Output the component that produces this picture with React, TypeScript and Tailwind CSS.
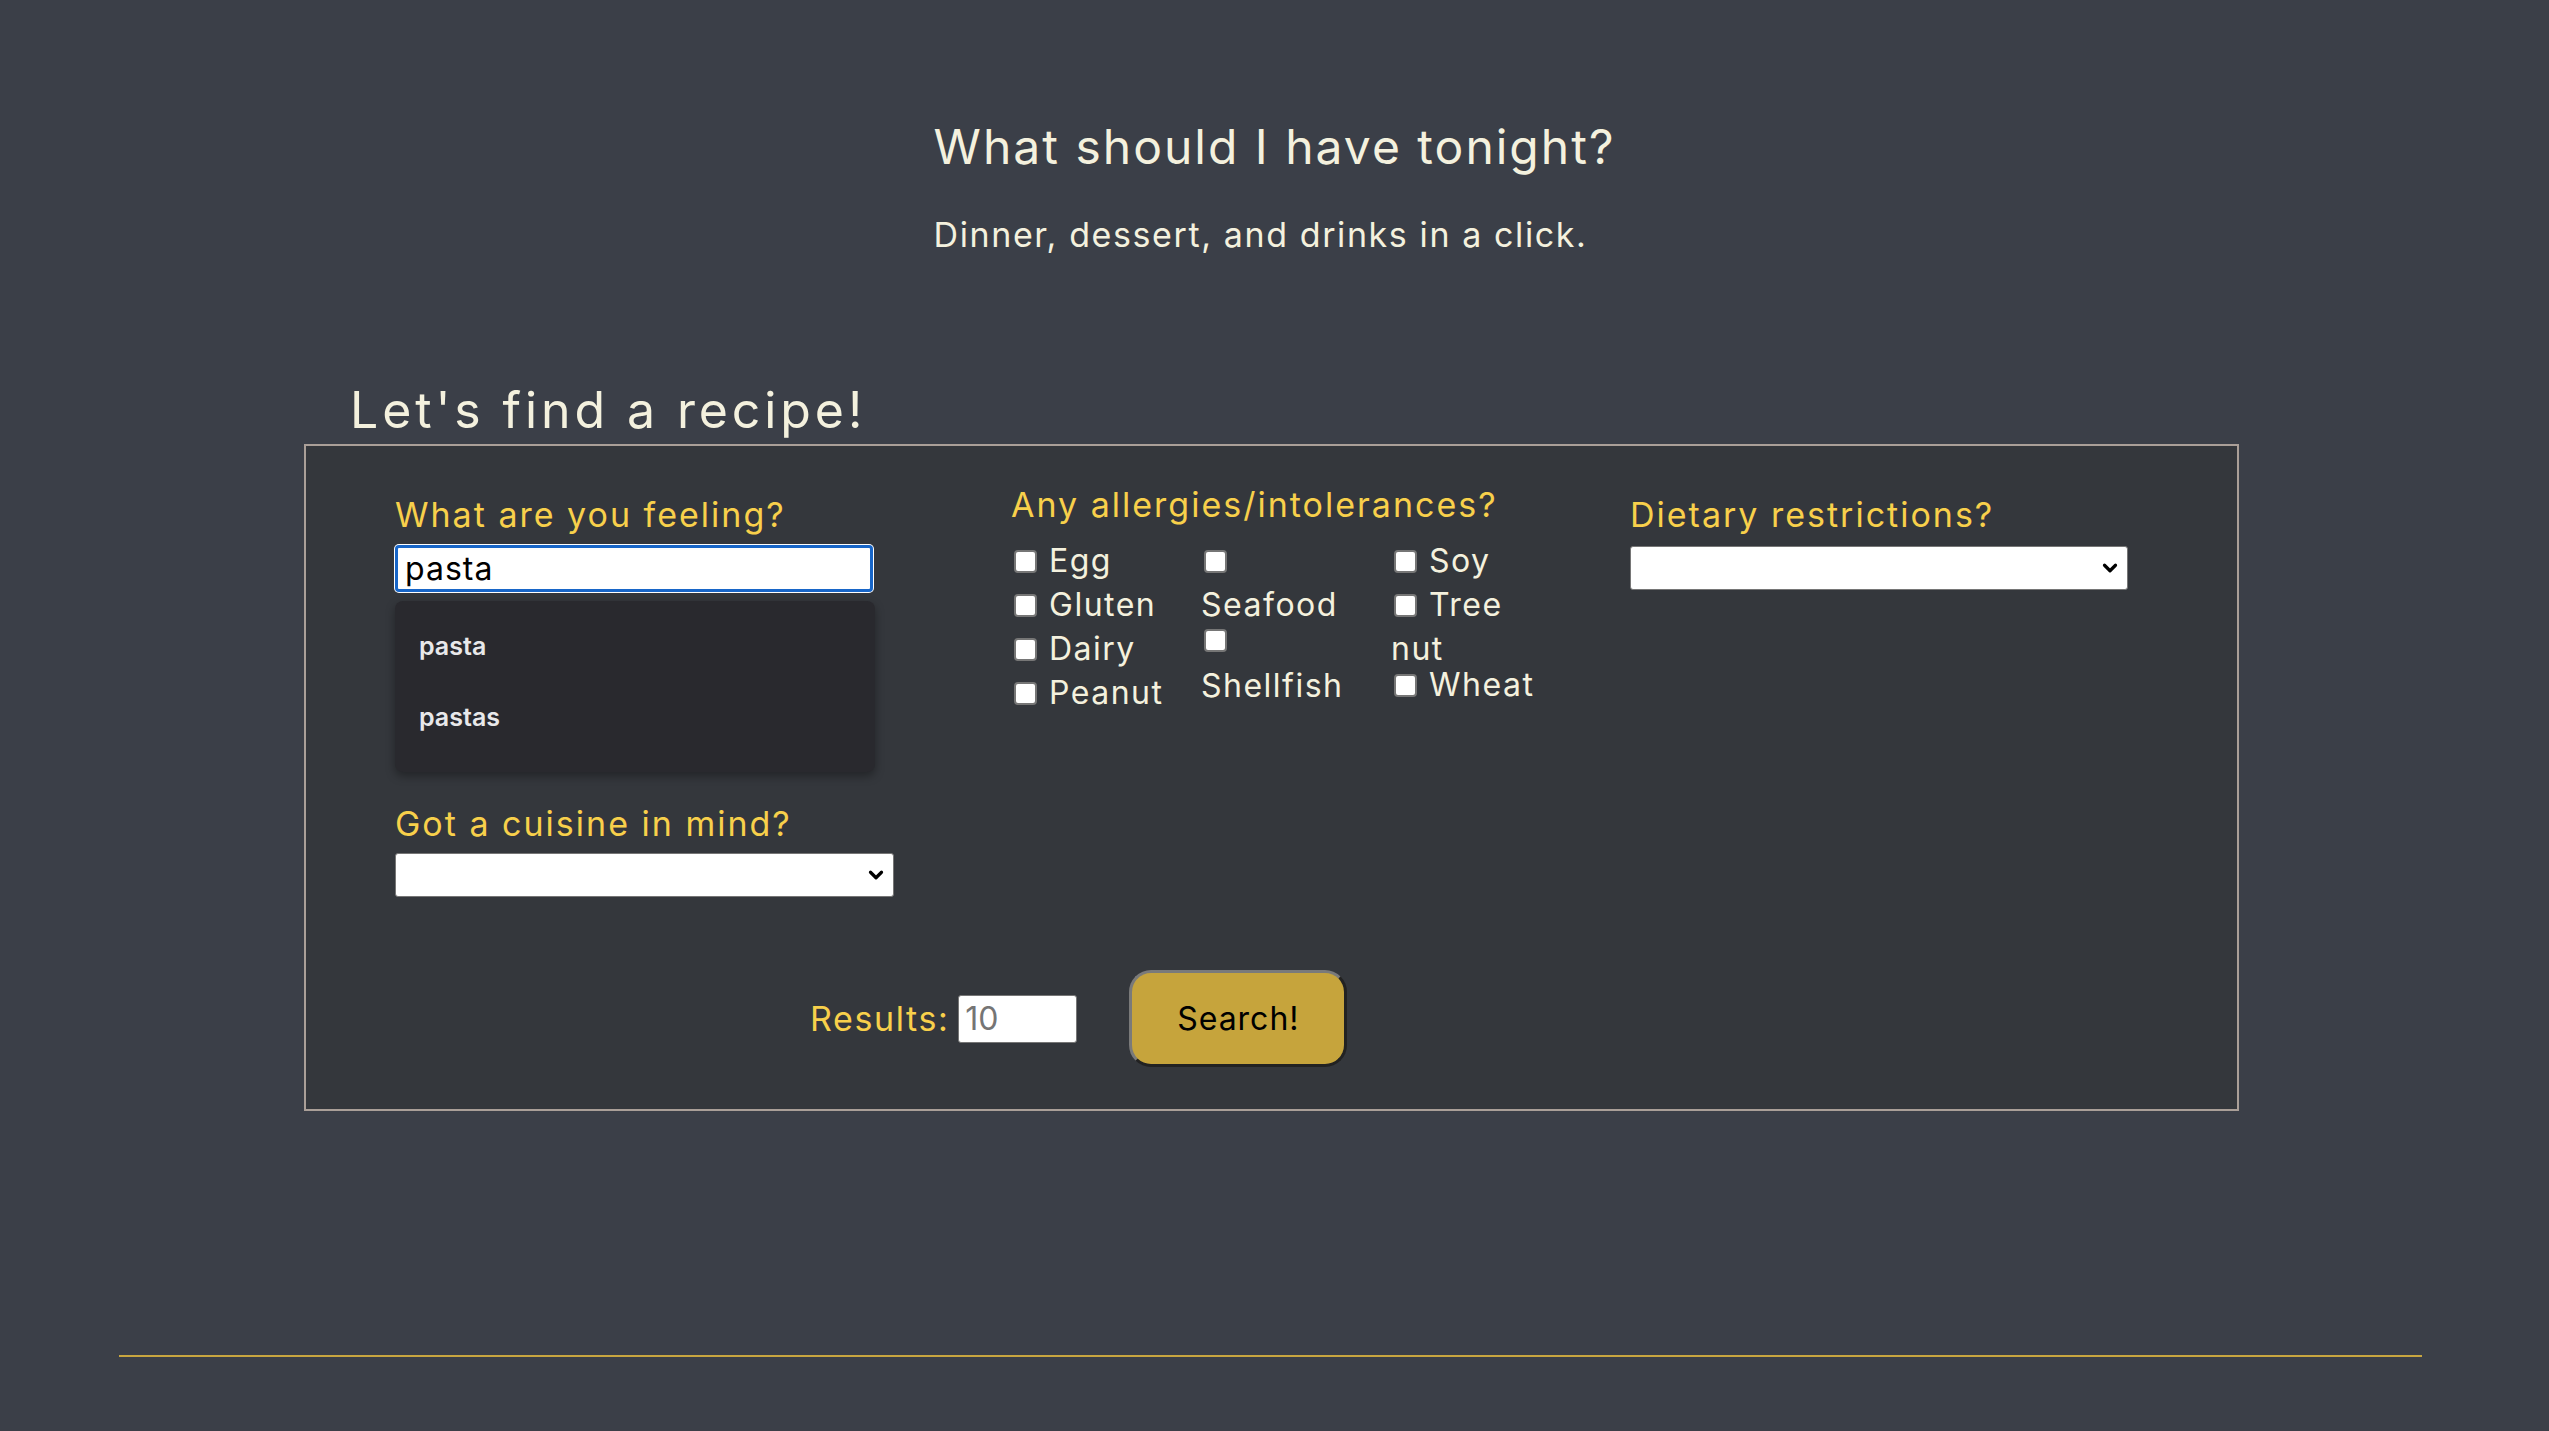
import { ChevronDown } from "lucide-react";

const SANS = "font-['Inter','Noto_Sans',sans-serif]";

type Line = { box?: boolean; text?: string; h: string };

// three sub-columns of the allergy picker; heights follow the wrapped lines
const ALLERGY_COLS: Line[][] = [
  [
    { box: true, text: "Egg", h: "h-[44px]" },
    { box: true, text: "Gluten", h: "h-[44px]" },
    { box: true, text: "Dairy", h: "h-[44px]" },
    { box: true, text: "Peanut", h: "h-[44px]" },
  ],
  [
    { box: true, h: "h-[44px]" },
    { text: "Seafood", h: "h-[44px]" },
    { box: true, h: "h-[26px]" },
    { text: "Shellfish", h: "h-[66px]" },
  ],
  [
    { box: true, text: "Soy", h: "h-[44px]" },
    { box: true, text: "Tree", h: "h-[44px]" },
    { text: "nut", h: "h-[44px]" },
    { box: true, text: "Wheat", h: "h-[28px]" },
  ],
];

function Checkbox() {
  return (
    <span className="ml-[3px] inline-block h-[23px] w-[23px] shrink-0 rounded-[4px] border-2 border-[#767676] bg-white" />
  );
}

function Select({ width }: { width: string }) {
  return (
    <div
      className={`flex h-[44px] ${width} items-center justify-end rounded-[3px] border border-[#767676] bg-white pr-[6px]`}
    >
      <ChevronDown size={22} strokeWidth={3.5} className="text-black" />
    </div>
  );
}

function Label({ children }: { children: React.ReactNode }) {
  return (
    <label className="block text-[34px] leading-[41px] tracking-[2px] text-[#f8d04b]">
      {children}
    </label>
  );
}

export default function App() {
  return (
    <div className={`min-h-screen bg-[#3b3f48] pb-[75px] ${SANS} text-[#f4f1de]`}>
      <header className="flex justify-center pt-[118px]">
        <div>
          <h1 className="text-[48px] leading-[58px] tracking-[2px]">
            What should I have tonight?
          </h1>
          <p className="mt-[38px] text-[34px] leading-[41px] tracking-[1.6px]">
            Dinner, dessert, and drinks in a click.
          </p>
        </div>
      </header>

      <main className="mt-[125px] pl-[304px]">
        <h2 className="ml-[46px] text-[50px] leading-[60px] tracking-[3.9px]">
          Let's find a recipe!
        </h2>

        <form className="mt-[4px] w-[1935px] border-2 border-[#aa9f98] bg-[#34373c] pb-[42px]">
          <div className="flex items-start pl-[89px] pt-[38px]">
            {/* search + cuisine */}
            <div className="mt-[10px] w-[616px]">
              <Label>What are you feeling?</Label>
              <div className="relative mt-[10px] w-[478px]">
                <input
                  readOnly
                  value="pasta"
                  className="h-[47px] w-full rounded-[4px] border-[3px] border-[#1866c8] bg-white px-[7px] text-[32px] tracking-[1px] text-black shadow-[0_0_0_1px_#ffffff] outline-none"
                />
                <ul className="absolute left-0 top-[56px] z-10 w-[480px] rounded-[8px] bg-[#29292e] pb-[19px] pt-[10px] shadow-[0_4px_10px_rgba(0,0,0,0.35)]">
                  {["pasta", "pastas"].map((s) => (
                    <li
                      key={s}
                      className="flex h-[71px] items-center pl-[24px] text-[25px] font-semibold text-[#e8e8ea]"
                    >
                      {s}
                    </li>
                  ))}
                </ul>
              </div>

              <div className="mt-[211px]">
                <Label>Got a cuisine in mind?</Label>
              </div>
              <div className="mt-[9px]">
                <Select width="w-[499px]" />
              </div>
            </div>

            {/* allergies */}
            <div className="w-[619px]">
              <Label>Any allergies/intolerances?</Label>
              <div className="mt-[14px] flex">
                {ALLERGY_COLS.map((col, i) => (
                  <div key={i} className="flex w-[190px] flex-col">
                    {col.map((line, j) => (
                      <div
                        key={j}
                        className={`flex ${line.h} items-center gap-[12px] text-[32px] tracking-[1.5px]`}
                      >
                        {line.box && <Checkbox />}
                        {line.text && <span>{line.text}</span>}
                      </div>
                    ))}
                  </div>
                ))}
              </div>
            </div>

            {/* diet */}
            <div className="mt-[10px]">
              <Label>Dietary restrictions?</Label>
              <div className="mt-[11px]">
                <Select width="w-[498px]" />
              </div>
            </div>
          </div>

          <div className="mt-[73px] flex items-center pl-[504px]">
            <span className="text-[34px] tracking-[1.6px] text-[#f8d04b]">Results:</span>
            <input
              readOnly
              placeholder="10"
              className="ml-[9px] h-[48px] w-[119px] rounded-[3px] border border-[#767676] bg-white px-[6px] text-[32px] text-black placeholder:text-[#757575] outline-none"
            />
            <button
              type="button"
              className="ml-[52px] h-[97px] w-[218px] rounded-[22px] border-[3px] border-b-[#222222] border-l-[#7a7a7a] border-r-[#222222] border-t-[#7a7a7a] bg-[#c6a43c] text-[32px] tracking-[1px] text-black"
            >
              Search!
            </button>
          </div>
        </form>
      </main>

      <hr className="ml-[119px] mt-[244px] w-[2303px] border-0 border-t-2 border-[#c8a640]" />
    </div>
  );
}
